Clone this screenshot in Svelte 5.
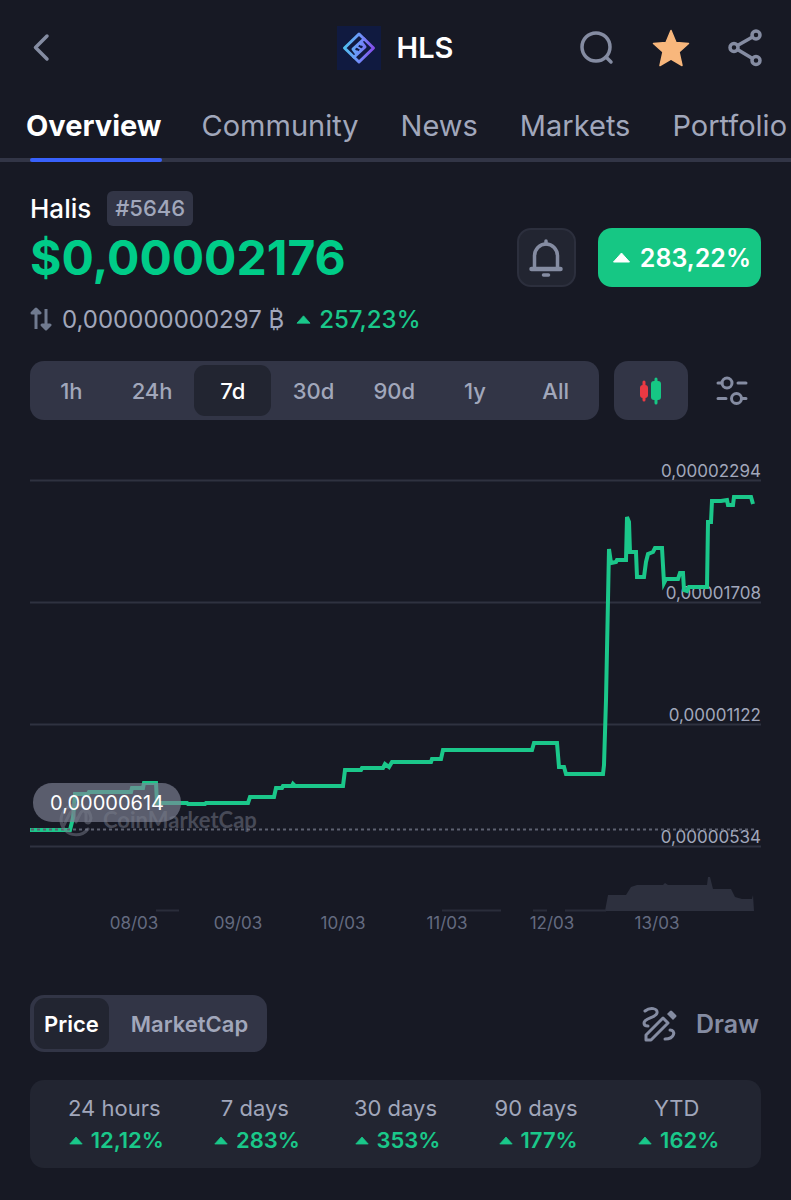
<script>
    let tab = 'Overview';
    let range = '7d';
    let mode = 'Price';

    const tabs = ['Overview', 'Community', 'News', 'Markets', 'Portfolio'];
    const ranges = ['1h', '24h', '7d', '30d', '90d', '1y', 'All'];
    const modes = ['Price', 'MarketCap'];

    const stats = [
        { label: '24 hours', value: '12,12%' },
        { label: '7 days', value: '283%' },
        { label: '30 days', value: '353%' },
        { label: '90 days', value: '177%' },
        { label: 'YTD', value: '162%' }
    ];

    const grid = [
        { y: 480, label: '0,00002294' },
        { y: 602, label: '0,00001708' },
        { y: 724, label: '0,00001122' },
        { y: 846, label: '0,00000534' }
    ];

    const dates = [
        { x: 134, label: '08/03' },
        { x: 238, label: '09/03' },
        { x: 343, label: '10/03' },
        { x: 447, label: '11/03' },
        { x: 552, label: '12/03' },
        { x: 657, label: '13/03' }
    ];

    const price = [
        [30, 830], [70, 830], [73, 818], [75, 794], [88, 794], [89, 792], [131, 792], [132, 788],
        [143, 788], [144, 783], [156, 783], [157, 803], [187, 803], [188, 804], [205, 804], [206, 803],
        [248, 803], [250, 797], [274, 797], [276, 788], [282, 788], [283, 786], [292, 786], [293, 784],
        [295, 786], [343, 786], [345, 770], [361, 770], [362, 768], [383, 768], [385, 764], [389, 767],
        [392, 762], [431, 762], [432, 759], [441, 759], [443, 750], [532, 750], [534, 743], [557, 743],
        [559, 767], [564, 767], [566, 774], [603, 774], [604, 765], [606, 700], [609, 549], [611, 563],
        [616, 562], [617, 560], [626, 560], [627, 517], [629, 522], [630, 552], [636, 552], [637, 577],
        [644, 577], [646, 562], [648, 554], [653, 552], [655, 548], [662, 548], [664, 583], [666, 579],
        [678, 579], [680, 573], [683, 573], [684, 590], [687, 591], [689, 587], [707, 587], [708, 522],
        [711, 522], [712, 501], [721, 501], [727, 500], [728, 505], [733, 505], [734, 497], [751, 497],
        [753, 504]
    ];

    const volume = [
        [605, 911], [608, 895], [626, 895], [631, 887], [637, 885], [663, 885], [665, 883], [668, 885],
        [707, 885], [708, 877], [710, 877], [713, 889], [731, 889], [735, 897], [742, 899], [752, 899],
        [753, 895], [754, 911]
    ];
</script>

<div class="page">
    <header>
        <button class="icon-button" aria-label="Back">
            <svg width="24" height="36" viewBox="0 0 24 36">
                <path d="M17 6 5.500 17.500 17 29" class="stroke" stroke-width="3.500" />
            </svg>
        </button>

        <div class="coin">
            <svg width="44" height="44" viewBox="0 0 44 44">
                <defs>
                    <linearGradient id="logo" x1="6" y1="20" x2="38" y2="24" gradientUnits="userSpaceOnUse">
                        <stop offset="0" stop-color="#4cc3ee" />
                        <stop offset="0.500" stop-color="#6f92fb" />
                        <stop offset="1" stop-color="#8546ea" />
                    </linearGradient>
                </defs>
                <rect width="44" height="44" fill="#101a40" />
                <g fill="none" stroke="url(#logo)" stroke-width="3" stroke-linejoin="round">
                    <path d="M22 8 36.500 22 22 36 7.500 22Z" />
                    <path d="M28 12 16 23 19 27 21 25" />
                    <path d="M16 32 28 21 25 17 23 19" />
                    <path d="M19 20 25 24" stroke-width="2" />
                </g>
            </svg>
            <h1>HLS</h1>
        </div>

        <div class="actions">
            <button class="icon-button" aria-label="Search">
                <svg width="38" height="38" viewBox="0 0 38 38">
                    <circle cx="20" cy="18" r="14" class="stroke" stroke-width="3.500" />
                    <path d="M30 28 35 33" class="stroke" stroke-width="3.500" />
                </svg>
            </button>
            <button class="icon-button" aria-label="Remove from watchlist">
                <svg width="40" height="40" viewBox="0 0 40 40">
                    <path
                        d="M21 2.500 26 14.500 38.500 15.500 29 24 32 37.500 21 31 10 37.500 13 24 3.500 15.500 16 14.500Z"
                        fill="#f8b77c" stroke="#f8b77c" stroke-width="1.500" stroke-linejoin="round"
                    />
                </svg>
            </button>
            <button class="icon-button" aria-label="Share">
                <svg width="38" height="38" viewBox="0 0 38 38">
                    <g class="stroke" stroke-width="3.500">
                        <circle cx="8" cy="18.500" r="4" />
                        <circle cx="30" cy="6" r="4" />
                        <circle cx="30" cy="31.500" r="4" />
                        <path d="M11.500 16.500 26.500 8M11.500 20.500 26.500 29.500" />
                    </g>
                </svg>
            </button>
        </div>
    </header>

    <nav>
        {#each tabs as name}
            <button class="tab" class:active={tab === name} on:click={() => (tab = name)}>{name}</button>
        {/each}
    </nav>

    <main>
        <section class="summary">
            <div>
                <div class="name">
                    <span>Halis</span>
                    <span class="rank">#5646</span>
                </div>
                <div class="price">$0,00002176</div>
            </div>
            <div class="summary-right">
                <button class="bell" aria-label="Price alert">
                    <svg width="36" height="40" viewBox="0 0 36 40">
                        <g class="stroke" stroke-width="3.500">
                            <path d="M6.500 30V18a11.500 12 0 0 1 23 0V30" />
                            <path d="M3.500 31H32.500" stroke-width="4.500" />
                            <path d="M18 3V6" />
                            <path d="M15.500 37H20.500" />
                        </g>
                    </svg>
                </button>
                <div class="change">
                    <svg width="19" height="11" viewBox="0 0 18 11"><path d="M1 10 9 1 17 10Z" class="arrow" /></svg>
                    283,22%
                </div>
            </div>
        </section>

        <div class="btc">
            <svg width="24" height="24" viewBox="0 0 24 24">
                <path d="M6 22V5M2 6 6 2 10 6Z" class="swap" />
                <path d="M16 2V19M12 18 16 22 20 18Z" class="swap" />
            </svg>
            <span class="amount">0,000000000297 ₿</span>
            <span class="up">
                <svg width="15" height="9" viewBox="0 0 18 11"><path d="M1 10 9 1 17 10Z" class="arrow" /></svg>
                257,23%
            </span>
        </div>

        <div class="controls">
            <div class="segmented ranges">
                {#each ranges as name}
                    <button class:active={range === name} on:click={() => (range = name)}>{name}</button>
                {/each}
            </div>
            <button class="candles" aria-label="Candlestick chart">
                <svg width="24" height="30" viewBox="0 0 24 30">
                    <path d="M5 6V24" stroke="#ea3943" stroke-width="3" stroke-linecap="round" />
                    <rect x="1" y="9" width="8" height="13" rx="3" fill="#ea3943" />
                    <path d="M17 3V27" stroke="#16c784" stroke-width="3" stroke-linecap="round" />
                    <rect x="12" y="5" width="10" height="19" rx="3" fill="#16c784" />
                </svg>
            </button>
            <button class="icon-button" aria-label="Chart settings">
                <svg width="34" height="30" viewBox="0 0 34 30">
                    <g class="stroke" stroke-width="3">
                        <circle cx="12" cy="7" r="5" />
                        <circle cx="21.500" cy="22.500" r="5" />
                        <path d="M3 7H7M23 7H31M3 22.500H11M27 22.500H31" />
                    </g>
                </svg>
            </button>
        </div>

        <svg class="chart" viewBox="30 440 731 510" role="img" aria-label="7 day price chart">
            {#each grid as line}
                <path d="M30 {line.y + 0.5}H761" stroke="#2f3240" stroke-width="2" />
                <text x="761" y={line.y - 3} class="axis">{line.label}</text>
            {/each}

            <polygon points={volume.join(' ')} fill="#2d303e" />
            <path d="M156 910.500H179M442 910.500H501M533 910.500H547M565 910.500H606" stroke="#2a2d3a" stroke-width="2" />

            <polyline points={price.join(' ')} fill="none" stroke="#1bc78a" stroke-width="4" />

            <!-- opening price -->
            <path d="M31 829.500H757" stroke="#5d6170" stroke-width="2" stroke-dasharray="3 3" />

            <rect x="33" y="783" width="148" height="39" rx="19" fill="#808396" fill-opacity="0.640" />

            <g opacity="0.500">
                <path
                    d="M88 829A15 15 0 1 1 91 818Q90 825 86 822V813Q83 808 80 814L76 822 74 813Q72 809 69 815L64 825"
                    fill="none" stroke="#777b8a" stroke-width="3" stroke-linecap="round" stroke-linejoin="round"
                />
                <text x="103" y="828" class="watermark">CoinMarketCap</text>
            </g>

            <text x="107" y="810" class="tip">0,00000614</text>

            {#each dates as date}
                <text x={date.x} y="929" class="date">{date.label}</text>
            {/each}
        </svg>

        <div class="modes">
            <div class="segmented">
                {#each modes as name}
                    <button class:active={mode === name} on:click={() => (mode = name)}>{name}</button>
                {/each}
            </div>
            <button class="draw">
                <svg width="36" height="36" viewBox="0 0 36 36">
                    <g class="stroke" stroke-width="3">
                        <path d="M3 5C8 1 16 2 15 7C14 12 2 12 2 17C2 19 4 20 6 20" />
                        <path d="M4 34V29L21 12 26 17 9 34Z" />
                        <path d="M28 24C34 24 33 33 23 33" />
                    </g>
                    <path d="M25 8 28 5Q29 4 30 5L34 9Q35 10 34 11L31 14Z" fill="#858ca2" />
                </svg>
                Draw
            </button>
        </div>

        <section class="stats">
            {#each stats as stat}
                <div class="stat">
                    <span>{stat.label}</span>
                    <span class="up">
                        <svg width="14" height="9" viewBox="0 0 18 11"><path d="M1 10 9 1 17 10Z" class="arrow" /></svg>
                        {stat.value}
                    </span>
                </div>
            {/each}
        </section>
    </main>
</div>

<style>
    :global(body) {
        margin: 0;
        background: #171924;
    }

    .page {
        min-height: 100vh;
        overflow: hidden;
        background: #171924;
        color: #fff;
        font-family: Inter, "Liberation Sans", sans-serif;
    }

    button {
        margin: 0;
        padding: 0;
        border: none;
        background: none;
        color: #a1a7bb;
        font: inherit;
        cursor: pointer;
    }

    svg {
        display: block;
        flex: none;
    }

    .stroke {
        fill: none;
        stroke: #858ca2;
        stroke-linecap: round;
        stroke-linejoin: round;
    }

    .arrow {
        fill: currentColor;
        stroke: currentColor;
        stroke-linejoin: round;
    }

    .swap {
        fill: #707a8f;
        stroke: #707a8f;
        stroke-width: 3;
        stroke-linejoin: round;
    }

    header {
        display: grid;
        grid-template-columns: 1fr auto 1fr;
        align-items: center;
        height: 95px;
        padding: 0 27px 0 30px;
    }

    .icon-button {
        justify-self: start;
    }

    .coin {
        display: flex;
        align-items: center;
        gap: 16px;
        margin-right: 4px;
    }

    h1 {
        margin: 0;
        font-size: 29px;
        font-weight: 600;
    }

    .actions {
        display: flex;
        align-items: center;
        justify-content: flex-end;
        gap: 36px;
    }

    nav {
        display: flex;
        gap: 42px;
        height: 63px;
        padding-left: 26px;
        border-bottom: 4px solid #323546;
    }

    .tab {
        position: relative;
        flex: none;
        height: 63px;
        padding-bottom: 3px;
        font-size: 29px;
    }

    .tab.active {
        margin-right: -2px;
        color: #fff;
        font-weight: 700;
    }

    .tab.active::after {
        content: "";
        position: absolute;
        left: 4px;
        right: 0;
        bottom: -4px;
        height: 4px;
        border-radius: 2px;
        background: #3861fb;
    }

    main {
        padding: 29px 30px 32px;
    }

    .summary {
        display: flex;
        justify-content: space-between;
        align-items: flex-end;
    }

    .name {
        display: flex;
        align-items: center;
        gap: 16px;
        font-size: 26px;
        font-weight: 500;
    }

    .rank {
        padding: 0 8px;
        border-radius: 6px;
        background: #323546;
        color: #a1a7bb;
        font-size: 22px;
        line-height: 35px;
    }

    .price {
        color: #0c8;
        font-size: 48px;
        font-weight: 700;
        line-height: 64px;
    }

    .summary-right {
        display: flex;
        gap: 22px;
        padding-bottom: 3px;
    }

    .bell {
        display: flex;
        align-items: center;
        justify-content: center;
        box-sizing: border-box;
        width: 59px;
        height: 59px;
        border: 2px solid #2c2f3d;
        border-radius: 14px;
        background: #222531;
    }

    .change {
        display: flex;
        align-items: center;
        gap: 9px;
        height: 59px;
        padding: 0 10px 0 14px;
        border-radius: 14px;
        background: #16c784;
        font-size: 25px;
        font-weight: 600;
    }

    .btc {
        display: flex;
        align-items: center;
        gap: 8px;
        height: 58px;
        color: #a1a7bb;
        font-size: 24px;
    }

    .amount {
        margin-right: 4px;
    }

    .up {
        display: flex;
        align-items: center;
        gap: 8px;
        color: #1ac88a;
        font-weight: 600;
    }

    .btc .up {
        font-weight: 500;
    }

    .controls {
        display: flex;
        align-items: center;
        gap: 15px;
        margin-top: 13px;
        padding-right: 12px;
    }

    .segmented {
        display: flex;
        box-sizing: border-box;
        padding: 4px;
        border-radius: 14px;
        background: #323546;
        font-size: 22px;
        font-weight: 500;
    }

    .segmented button {
        height: 51px;
        border-radius: 11px;
    }

    .segmented .active {
        background: #222531;
        color: #fff;
    }

    .ranges {
        flex: 1;
        gap: 4px;
        padding-right: 5px;
        padding-left: 3px;
    }

    .ranges button {
        flex: 1;
    }

    .candles {
        display: flex;
        align-items: center;
        justify-content: center;
        width: 74px;
        height: 59px;
        margin-right: 12px;
        border-radius: 14px;
        background: #323546;
    }

    .chart {
        width: 100%;
        margin-top: 20px;
    }

    .axis {
        fill: #a1a7bb;
        font-size: 17px;
        text-anchor: end;
    }

    .date {
        fill: #646b80;
        font-size: 17px;
        text-anchor: middle;
    }

    .tip {
        fill: #fff;
        font-size: 20px;
        text-anchor: middle;
    }

    .watermark {
        fill: #777b8a;
        font-family: Lato, sans-serif;
        font-size: 22px;
        font-weight: 700;
    }

    .modes {
        display: flex;
        justify-content: space-between;
        align-items: center;
        margin-top: 45px;
    }

    .modes .segmented {
        gap: 8px;
        padding: 3px 4px;
        font-weight: 600;
    }

    .modes .segmented button {
        padding: 0 15px 0 14px;
    }

    .modes .segmented .active {
        padding: 0 10px;
    }

    .draw {
        display: flex;
        align-items: center;
        gap: 18px;
        padding-right: 2px;
        color: #858ca2;
        font-size: 25px;
        font-weight: 600;
    }

    .stats {
        display: grid;
        grid-template-columns: repeat(5, 1fr);
        margin-top: 28px;
        padding: 12px 14px;
        border-radius: 14px;
        background: #222531;
        font-size: 22px;
        line-height: 32px;
    }

    .stat {
        display: flex;
        flex-direction: column;
        align-items: center;
        color: #a1a7bb;
    }

    .stat .up {
        padding-left: 4px;
    }
</style>
